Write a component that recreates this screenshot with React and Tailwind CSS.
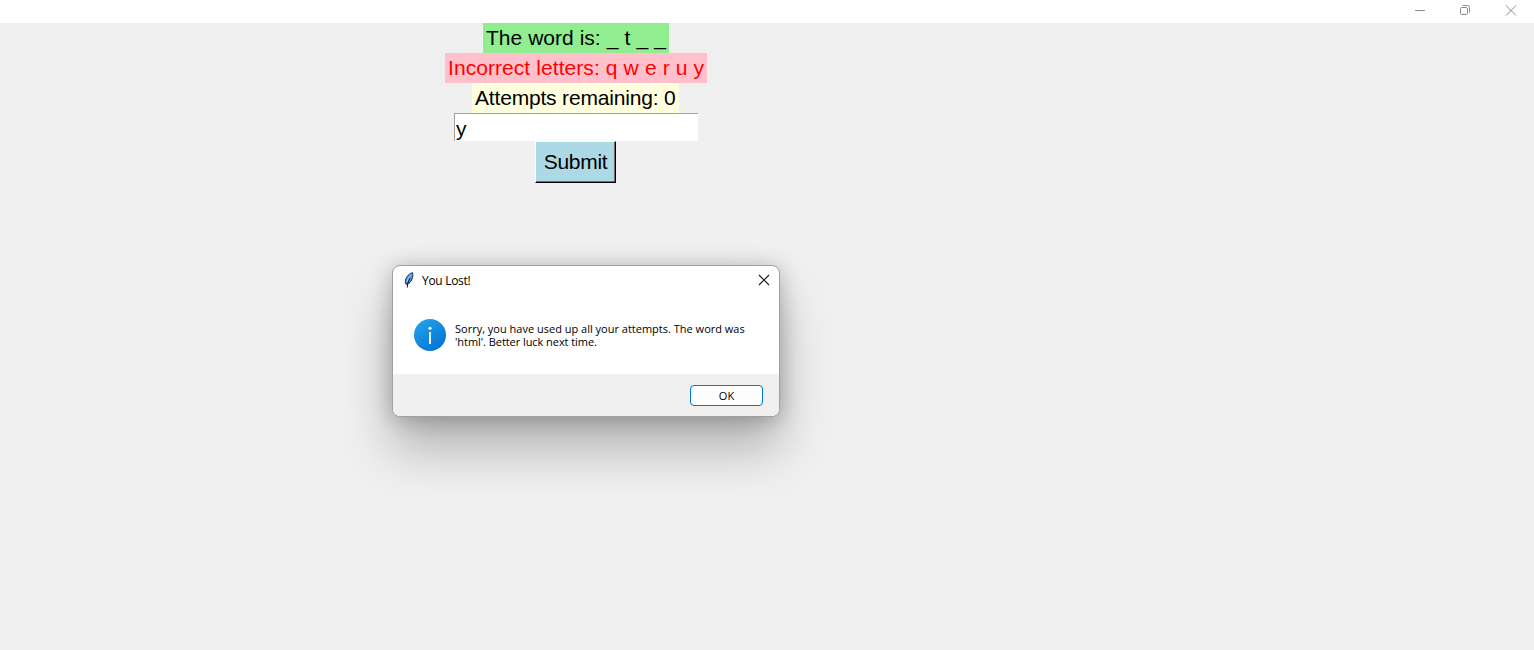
function WindowControls() {
  return (
    <div className="flex text-[#8b8b8b]">
      <svg width="46" height="23" viewBox="0 0 46 23" fill="none" stroke="currentColor">
        <path d="M19 10.5h10" />
      </svg>
      <svg width="46" height="23" viewBox="0 0 46 23" fill="none" stroke="currentColor">
        <rect x="18.500" y="7.500" width="7" height="7" rx="1.200" />
        <path d="M20.5 5.5h5q2 0 2 2v5" />
      </svg>
      <svg width="46" height="23" viewBox="0 0 46 23" fill="none" stroke="currentColor">
        <path d="M18 5.5l10 10M28 5.5l-10 10" />
      </svg>
    </div>
  );
}

function Feather() {
  return (
    <svg width="10" height="16" viewBox="0 0 10 16" className="relative -top-px">
      <path d="M8.600 .7C5.800 1 2.200 4.400 1.500 8.200c-.3 1.600-.2 2.800.4 3.800l1 .3C5.800 11.500 7.700 9 8.500 5.500c.4-1.900.5-3.800.1-4.800z" fill="#4f93e6" stroke="#141c2c" strokeWidth="0.9" />
      <path d="M7.400 2.500C5.300 4.500 3.500 7 2.900 10" fill="none" stroke="#a9d0ff" strokeWidth="1" />
      <path d="M6 6.500C4.300 9 3.300 12 3.300 15.500" fill="none" stroke="#0a0d14" strokeWidth="1" />
    </svg>
  );
}

function InfoIcon() {
  return (
    <svg width="32" height="32" viewBox="0 0 32 32">
      <defs>
        <linearGradient id="info" x1="0.15" y1="0.1" x2="0.8" y2="0.95">
          <stop offset="0" stopColor="#22a1e8" />
          <stop offset="1" stopColor="#0273d3" />
        </linearGradient>
      </defs>
      <circle cx="16" cy="16" r="16" fill="url(#info)" />
      <circle cx="16" cy="9.300" r="1.500" fill="#fff" />
      <path d="M16 13v12" stroke="#fff" strokeWidth="1.8" />
    </svg>
  );
}

function Dialog() {
  return (
    <div className="absolute left-[392px] top-[265px] flex h-[152px] w-[388px] flex-col overflow-hidden rounded-lg border border-[#a0a0a0] bg-white font-['Open_Sans','Noto_Sans',sans-serif] text-[11px] text-black shadow-[0_32px_50px_rgba(0,0,0,0.26),0_2px_21px_rgba(0,0,0,0.24)]">
      <div className="flex h-[30px] items-center pl-[11px] pr-[9px]">
        <Feather />
        <span className="ml-2 grow whitespace-nowrap text-[12px] tracking-[-0.3px]">You Lost!</span>
        <svg width="12" height="12" viewBox="0 0 12 12" stroke="#1a1a1a" strokeWidth="1.1" className="mb-[2px]">
          <path d="M1 1l10 10M11 1L1 11" />
        </svg>
      </div>
      <div className="flex grow items-start pl-[21px] pt-[23px]">
        <InfoIcon />
        <p className="ml-[9px] mt-[3px] whitespace-nowrap leading-[13px]">
          Sorry, you have used up all your attempts. The word was
          <br />
          <span className="tracking-[-0.06px]">'html'. Better luck next time.</span>
        </p>
      </div>
      <div className="flex h-[42px] shrink-0 items-start justify-end bg-[#f0f0f0] pr-4 pt-[11px]">
        <button className="flex h-[21px] w-[73px] items-center justify-center rounded-[4px] border border-[#0078d4] bg-[#fdfdfd] pt-[2px]">
          OK
        </button>
      </div>
    </div>
  );
}

export default function App() {
  return (
    <div className="relative h-[650px] w-[1534px] overflow-hidden bg-[#f0f0f0] font-['Liberation_Sans',Arial,sans-serif]">
      <header className="flex h-[23px] justify-end bg-white">
        <WindowControls />
      </header>
      <main className="flex w-[1152px] flex-col items-center text-[21px] leading-[30px] text-black">
        <div className="w-[186px] whitespace-pre bg-[#90ee90] pl-[3px] tracking-[-0.05px] [word-spacing:0.4px]">The word is: _ t _ _</div>
        <div className="w-[262px] whitespace-pre bg-[#ffc0cb] pl-[3px] tracking-[0.06px] text-[#ff0000] [word-spacing:0.15px]">Incorrect letters: q w e r u y</div>
        <div className="mr-px w-[207px] whitespace-pre bg-[#ffffe0] pl-[3px] tracking-[-0.18px]">Attempts remaining: 0</div>
        <div className="h-7 w-[244px] border-l border-t border-[#a0a0a0] bg-white pl-px">y</div>
        <button className="mr-px flex h-[42px] w-[81px] items-center justify-center border-b border-l border-r border-t border-b-black border-l-white border-r-black border-t-white bg-[#add8e6] tracking-[-0.3px] shadow-[inset_-1px_-1px_0_#696969]">
          Submit
        </button>
      </main>
      <Dialog />
    </div>
  );
}
